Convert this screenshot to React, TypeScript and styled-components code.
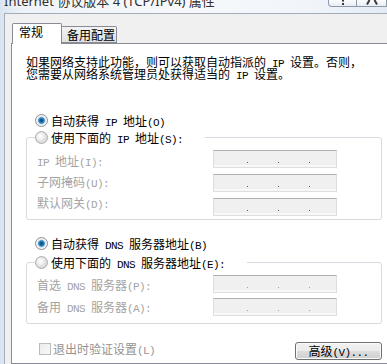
import React from "react";
import styled, { createGlobalStyle } from "styled-components";

const GlobalStyle = createGlobalStyle`
  html, body {
    margin: 0;
    padding: 0;
    overflow: hidden;
    background: #f0f0f0;
  }
  body {
    font-family: "Noto Sans CJK SC", "Noto Sans", sans-serif;
  }
`;

const Screen = styled.div`
  width: 387px;
  height: 364px;
  overflow: hidden;
  display: flex;
  flex-direction: column;
  background: linear-gradient(90deg, #d9e4f0 0%, #eef3f8 6%, #f6f8fb 45%, #f1f5fa 80%, #e2ebf5 100%);
`;

const TitleBar = styled.div`
  height: 13px;
  flex-shrink: 0;
  display: flex;
  align-items: flex-start;
  overflow: hidden;
`;

const Title = styled.div`
  margin: -6px 0 0 4px;
  font-family: "Noto Sans", "Noto Sans CJK SC", sans-serif;
  font-size: 13px;
  line-height: 14px;
  color: #2f2f2f;
  white-space: nowrap;
  text-shadow: 0 0 4px #ffffff;
`;

const Caption = styled.div`
  margin-left: auto;
  display: flex;
`;

const CaptionButton = styled.div<{ $w: number; $first?: boolean }>`
  width: ${(p) => p.$w}px;
  height: 7px;
  box-sizing: border-box;
  border: 1px solid #8e99a8;
  border-top: none;
  border-left: ${(p) => (p.$first ? "1px solid #8e99a8" : "none")};
  border-radius: ${(p) => (p.$first ? "0 0 0 4px" : "0")};
  background: linear-gradient(#fbfcfd, #e9eef4);
  display: flex;
  justify-content: center;
  align-items: flex-start;
  overflow: hidden;
`;

const Client = styled.div`
  flex: 1;
  margin-left: 4px;
  border-top: 1px solid #a3adb9;
  border-left: 1px solid #a3adb9;
  background: #f0f0f0;
  padding: 9px 0 0 6px;
  display: flex;
  flex-direction: column;
`;

const Tabs = styled.div`
  height: 21px;
  display: flex;
  align-items: flex-end;
  padding-left: 1px;
  margin-bottom: -1px;
  position: relative;
  z-index: 1;
`;

const Tab = styled.div<{ $active?: boolean }>`
  box-sizing: border-box;
  font-size: 12px;
  line-height: 12px;
  color: #000;
  white-space: nowrap;
  border: 1px solid #898c95;
  ${(p) =>
    p.$active
      ? `
    width: 50px;
    height: 21px;
    border-bottom: none;
    border-radius: 2px 2px 0 0;
    background: #ffffff;
    padding: 2px 0 0 6px;
  `
      : `
    width: 55px;
    height: 17px;
    border-left: none;
    border-radius: 0 2px 0 0;
    margin-bottom: 1px;
    background: linear-gradient(#f3f3f3, #e0e0e0);
    padding: 2px 0 0 5px;
  `}
`;

const Panel = styled.div`
  flex-shrink: 0;
  width: 384px;
  flex: 1;
  border: 1px solid #898c95;
  background: #ffffff;
  padding: 12px 0 0 14px;
  display: flex;
  flex-direction: column;
  align-items: flex-start;
`;

/* half-width latin, SimSun-like 6px advance */
const Lat = styled.span`
  font-family: "Liberation Mono", monospace;
  font-size: 11px;
  line-height: 0;
  letter-spacing: -0.6px;
`;

const Intro = styled.p`
  margin: 0;
  font-size: 12px;
  line-height: 12px;
  color: #000;
  white-space: nowrap;
`;

const Option = styled.label<{ $top?: number; $indent?: number }>`
  display: flex;
  align-items: center;
  height: 13px;
  margin-top: ${(p) => p.$top ?? 0}px;
  margin-left: ${(p) => p.$indent ?? 0}px;
  font-size: 12px;
  line-height: 12px;
  color: #000;
  white-space: nowrap;
`;

const Text = styled.span`
  white-space: pre;
`;

const Radio = styled.span<{ $checked?: boolean }>`
  flex-shrink: 0;
  width: 13px;
  height: 13px;
  box-sizing: border-box;
  margin-right: 3px;
  border-radius: 50%;
  border: 1px solid ${(p) => (p.$checked ? "#8a8f94" : "#a9acaf")};
  background: ${(p) =>
    p.$checked
      ? "radial-gradient(circle, #0e4775 0, #1d6aa0 1.8px, #4d9bcf 3px, #a9d0ea 3.6px, #eeeeee 4.2px, #f7f7f7 5.5px)"
      : "radial-gradient(circle at 40% 40%, #ffffff 0, #f3f3f3 2.5px, #dcdcdc 5.5px)"};
`;

const Group = styled.fieldset<{ $top: number; $bottom: number }>`
  width: 356px;
  min-width: 0;
  box-sizing: border-box;
  margin: ${(p) => p.$top}px 0 0;
  padding: 0 44px ${(p) => p.$bottom}px 10px;
  border: 1px solid #d5dbe0;
  border-radius: 3px;
`;

const Legend = styled.legend<{ $w: number }>`
  width: ${(p) => p.$w}px;
  box-sizing: border-box;
  padding: 0;
  margin-left: -2px;
`;

const GroupBody = styled.div`
  display: grid;
  grid-template-columns: 1fr 124px;
`;

const Column = styled.div<{ $pad: number; $gap: number }>`
  display: flex;
  flex-direction: column;
  padding-top: ${(p) => p.$pad}px;
  gap: ${(p) => p.$gap}px;
`;

const FieldLabel = styled.div`
  height: 12px;
  font-size: 12px;
  line-height: 12px;
  color: #a3a3a3;
  white-space: pre;
`;

const IpBox = styled.div<{ $faint?: boolean }>`
  height: 18px;
  box-sizing: border-box;
  border: 1px solid #dedede;
  border-top-color: #b0b0b0;
  background: #f0f0f0;
  box-shadow: inset 0 -2px 0 #f8f8f8;
  display: flex;
  align-items: flex-end;
  padding: 0 0 4px 33px;
  gap: 30px;

  & > span {
    width: 1px;
    height: 1px;
    background: ${(p) => (p.$faint ? "#a0a0a0" : "#5a5a5a")};
  }
`;

const Footer = styled.div`
  width: 356px;
  box-sizing: border-box;
  margin-top: 18px;
  padding-left: 13px;
  display: flex;
  justify-content: space-between;
  align-items: flex-start;
`;

const CheckLabel = styled.label`
  display: flex;
  align-items: center;
  height: 13px;
  font-size: 12px;
  line-height: 12px;
  color: #939393;
  white-space: nowrap;
`;

const CheckBox = styled.span`
  width: 12px;
  height: 12px;
  box-sizing: border-box;
  margin: 1px 2px 0 0;
  border: 1px solid #bcbcbc;
  background: linear-gradient(135deg, #ececec, #f8f8f8);
`;

const Button = styled.button`
  width: 87px;
  height: 18px;
  box-sizing: border-box;
  padding: 0;
  border: 1px solid #707070;
  border-radius: 3px;
  background: linear-gradient(#f2f2f2 0%, #ebebeb 48%, #dddddd 52%, #cfcfcf 100%);
  box-shadow: inset 0 0 0 1px #fbfbfb;
  font-family: "Noto Sans CJK SC", sans-serif;
  font-size: 12px;
  line-height: 12px;
  color: #000;
  white-space: nowrap;
`;

const IpField = ({ faint }: { faint?: boolean }) => (
  <IpBox $faint={faint}>
    <span />
    <span />
    <span />
  </IpBox>
);

export default function App() {
  return (
    <>
      <GlobalStyle />
      <Screen>
        <TitleBar>
          <Title>Internet 协议版本 4 (TCP/IPv4) 属性</Title>
          <Caption>
            <CaptionButton $w={29} $first>
              <svg width="6" height="6" viewBox="0 0 6 6">
                <rect x="2" y="0" width="2" height="1.6" fill="#3a3a3a" />
                <rect x="2" y="3" width="2" height="2" fill="#3a3a3a" />
              </svg>
            </CaptionButton>
            <CaptionButton $w={30}>
              <svg width="12" height="6" viewBox="0 0 12 6">
                <path d="M3.5 0 L1 4.5 M8.5 0 L11 4.5" stroke="#3a3a3a" strokeWidth="2" />
              </svg>
            </CaptionButton>
          </Caption>
        </TitleBar>
        <Client>
          <Tabs>
            <Tab $active>常规</Tab>
            <Tab>备用配置</Tab>
          </Tabs>
          <Panel>
            <Intro>
              如果网络支持此功能，则可以获取自动指派的<Lat> IP </Lat>设置。否则，
              <br />
              您需要从网络系统管理员处获得适当的<Lat> IP </Lat>设置。
            </Intro>

            <Option $top={34} $indent={9}>
              <Radio $checked />
              <Text>
                自动获得<Lat> IP </Lat>地址<Lat>(O)</Lat>
              </Text>
            </Option>
            <Group $top={4} $bottom={3}>
              <Legend $w={170}>
                <Option>
                  <Radio />
                  <Text>
                    使用下面的<Lat> IP </Lat>地址<Lat>(S):</Lat>
                  </Text>
                </Option>
              </Legend>
              <GroupBody>
                <Column $pad={11} $gap={9}>
                  <FieldLabel>
                    <Lat>IP </Lat>地址<Lat>(I):</Lat>
                  </FieldLabel>
                  <FieldLabel>
                    子网掩码<Lat>(U):</Lat>
                  </FieldLabel>
                  <FieldLabel>
                    默认网关<Lat>(D):</Lat>
                  </FieldLabel>
                </Column>
                <Column $pad={6} $gap={6}>
                  <IpField />
                  <IpField />
                  <IpField />
                </Column>
              </GroupBody>
            </Group>

            <Option $top={17} $indent={9}>
              <Radio $checked />
              <Text>
                自动获得<Lat> DNS </Lat>服务器地址<Lat>(B)</Lat>
              </Text>
            </Option>
            <Group $top={6} $bottom={7}>
              <Legend $w={212}>
                <Option>
                  <Radio />
                  <Text>
                    使用下面的<Lat> DNS </Lat>服务器地址<Lat>(E):</Lat>
                  </Text>
                </Option>
              </Legend>
              <GroupBody>
                <Column $pad={10} $gap={10}>
                  <FieldLabel>
                    首选<Lat> DNS </Lat>服务器<Lat>(P):</Lat>
                  </FieldLabel>
                  <FieldLabel>
                    备用<Lat> DNS </Lat>服务器<Lat>(A):</Lat>
                  </FieldLabel>
                </Column>
                <Column $pad={6} $gap={5}>
                  <IpField faint />
                  <IpField faint />
                </Column>
              </GroupBody>
            </Group>

            <Footer>
              <CheckLabel>
                <CheckBox />
                <Text>
                  退出时验证设置<Lat>(L)</Lat>
                </Text>
              </CheckLabel>
              <Button>
                高级<Lat>(V)...</Lat>
              </Button>
            </Footer>
          </Panel>
        </Client>
      </Screen>
    </>
  );
}
